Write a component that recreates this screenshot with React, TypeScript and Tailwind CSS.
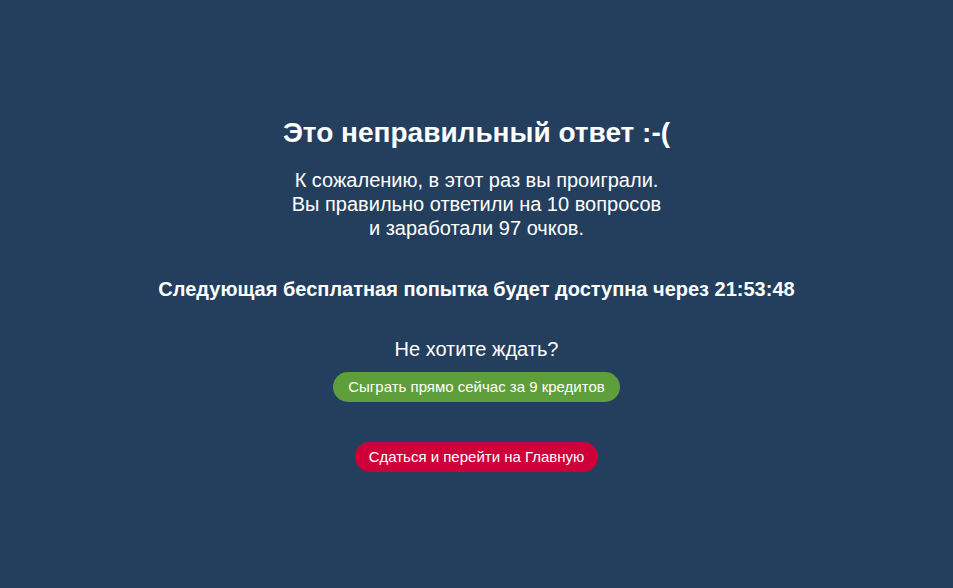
import React from "react";

export default function App() {
  return (
    <div className="w-full h-[588px] bg-[#243f5e] text-white flex flex-col items-center font-['Liberation_Sans',Arial,sans-serif]">
      <h1 className="mt-[117px] text-[28px] leading-[32px] font-bold">
        Это неправильный ответ :-(
      </h1>
      <p className="mt-[19px] text-[20px] leading-[24px] text-center">
        К сожалению, в этот раз вы проиграли.
        <br />
        Вы правильно ответили на 10 вопросов
        <br />
        и заработали 97 очков.
      </p>
      <p className="mt-[37px] text-[20px] leading-[24px] font-bold">
        Следующая бесплатная попытка будет доступна через 21:53:48
      </p>
      <p className="mt-[36px] text-[20px] leading-[24px]">Не хотите ждать?</p>
      <button className="mt-[11px] h-[30px] px-[15px] rounded-full bg-[#5f9f3b] text-[15px] text-white">
        Сыграть прямо сейчас за 9 кредитов
      </button>
      <button className="mt-[40px] h-[30px] px-[14px] rounded-full bg-[#cf0039] text-[15px] text-white">
        Сдаться и перейти на Главную
      </button>
    </div>
  );
}
